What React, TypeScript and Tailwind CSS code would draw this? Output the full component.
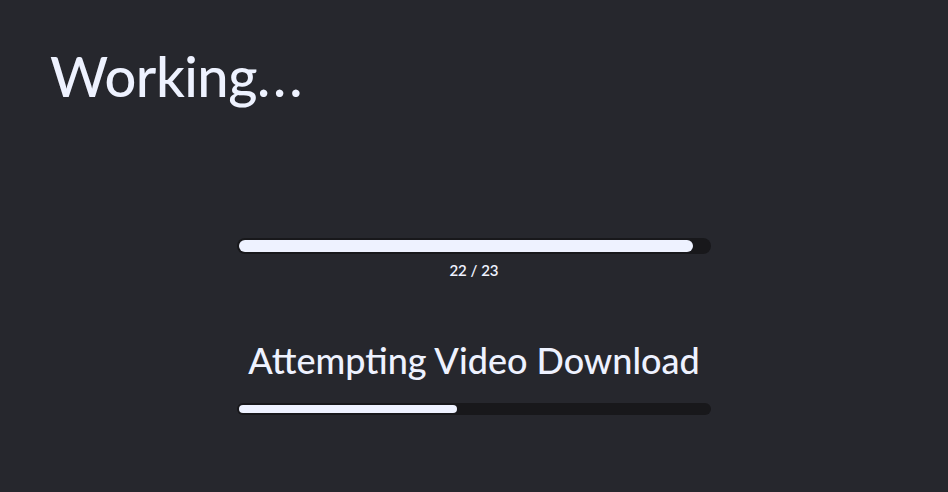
import React from "react";

function Bar({ pct, h }: { pct: number; h: string }) {
  return (
    <div className={`w-full rounded-full bg-[#18181b] p-[2px] ${h}`}>
      <div className="h-full rounded-full bg-[#eef2ff]" style={{ width: `${pct}%` }} />
    </div>
  );
}

export default function App() {
  return (
    <div
      className="flex h-[492px] w-[948px] flex-col bg-[#26272d] text-[#eef2ff]"
      style={{ fontFamily: "Lato, 'Open Sans', sans-serif" }}
    >
      <h1 className="pl-[50px] pt-[42px] text-[56px] font-medium leading-[1.2] tracking-[-0.5px]">
        Working<span className="tracking-[3px]">...</span>
      </h1>
      <div className="mx-auto mt-[129px] flex w-[474px] flex-col items-center">
        <Bar pct={96.6} h="h-4" />
        <div className="mt-[6px] text-[15px] font-semibold leading-5">22 / 23</div>
        <div className="mt-[58px] text-[36px] font-medium leading-[44px]">
          Attempting Video Download
        </div>
        <div className="mt-[21px] w-full">
          <Bar pct={46.4} h="h-3" />
        </div>
      </div>
    </div>
  );
}
